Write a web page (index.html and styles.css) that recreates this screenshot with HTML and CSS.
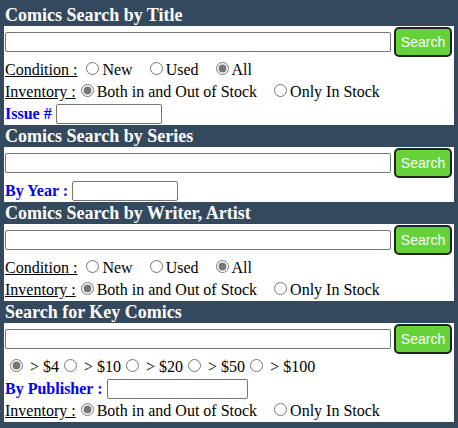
FILE: index.html
```html
<!doctype html>
<html lang="en">
<head>
  <meta charset="utf-8">
  <title>Comics Search</title>
  <link rel="stylesheet" href="styles.css">
</head>
<body>
  <div class="page">
    <h2 class="band">Comics Search by Title</h2>
    <form class="panel">
      <div class="search-row"><input type="text" class="q"><button type="button" class="go">Search</button></div>
      <div class="line"><span class="tag">Condition :</span> <input type="radio" name="c1">New&nbsp;&nbsp;&nbsp;<input type="radio" name="c1">Used&nbsp;&nbsp;&nbsp;<input type="radio" name="c1" checked>All</div>
      <div class="line"><span class="tag">Inventory :</span><input type="radio" name="i1" checked>Both in and Out of Stock&nbsp;&nbsp;&nbsp;<input type="radio" name="i1">Only In Stock</div>
      <div class="field"><span class="blue">Issue #</span><input type="text" class="small"></div>
    </form>

    <h2 class="band">Comics Search by Series</h2>
    <form class="panel">
      <div class="search-row"><input type="text" class="q"><button type="button" class="go">Search</button></div>
      <div class="field"><span class="blue">By Year :</span><input type="text" class="small"></div>
    </form>

    <h2 class="band">Comics Search by Writer, Artist</h2>
    <form class="panel">
      <div class="search-row"><input type="text" class="q"><button type="button" class="go">Search</button></div>
      <div class="line"><span class="tag">Condition :</span> <input type="radio" name="c3">New&nbsp;&nbsp;&nbsp;<input type="radio" name="c3">Used&nbsp;&nbsp;&nbsp;<input type="radio" name="c3" checked>All</div>
      <div class="line"><span class="tag">Inventory :</span><input type="radio" name="i3" checked>Both in and Out of Stock&nbsp;&nbsp;&nbsp;<input type="radio" name="i3">Only In Stock</div>
    </form>

    <h2 class="band">Search for Key Comics</h2>
    <form class="panel">
      <div class="search-row"><input type="text" class="q"><button type="button" class="go">Search</button></div>
      <div class="line"><input type="radio" name="p4" checked>&nbsp;&gt; $4<input type="radio" name="p4">&nbsp;&gt; $10<input type="radio" name="p4">&nbsp;&gt; $20<input type="radio" name="p4">&nbsp;&gt; $50<input type="radio" name="p4">&nbsp;&gt; $100</div>
      <div class="field"><span class="blue">By Publisher :</span><input type="text" class="small wide"></div>
      <div class="line"><span class="tag">Inventory :</span><input type="radio" name="i4" checked>Both in and Out of Stock&nbsp;&nbsp;&nbsp;<input type="radio" name="i4">Only In Stock</div>
    </form>
  </div>
</body>
</html>
```

FILE: styles.css
```css
body{
  margin: 0;
  background-color: #34495e;
  font-family: "Liberation Serif", "Times New Roman", serif;
  font-size: 16px;
  color: #000;
}
.page{
  padding: 4px 4px 6px;
}
.band{
  margin: 0;
  padding-left: 1px;
  color: #fff;
  font-size: 18px;
  line-height: 22px;
  font-weight: bold;
}
.panel{
  background-color: #fff;
  margin: 0;
  padding: 1px 1px 0;
}
.search-row{
  display: flex;
  align-items: center;
  height: 30px;
  margin-bottom: 2px;
}
input[type=text]{
  box-sizing: border-box;
  height: 20px;
  margin: 0;
  padding: 1px 2px;
  border: 1px solid #767676;
  border-radius: 2px;
  font-size: 13px;
}
.q{
  width: 386px;
}
.small{
  width: 106px;
}
.small.wide{
  width: 141px;
}
.go{
  box-sizing: border-box;
  margin-left: 3px;
  width: 58px;
  height: 30px;
  border: 2px solid #222;
  border-radius: 5px;
  background-color: #66d23a;
  color: #fff;
  font-family: "Liberation Sans", Arial, sans-serif;
  font-size: 14px;
  padding: 0;
}
.line{
  height: 22px;
  line-height: 22px;
  white-space: nowrap;
}
.line input[type=radio]{
  accent-color: #777;
  width: 13px;
  height: 13px;
  margin: 3px 3px 0 5px;
}
.tag{
  text-decoration: underline;
}
.field{
  display: flex;
  align-items: center;
  gap: 4px;
  height: 22px;
}
.blue{
  color: #0000ff;
  font-weight: bold;
}
```
